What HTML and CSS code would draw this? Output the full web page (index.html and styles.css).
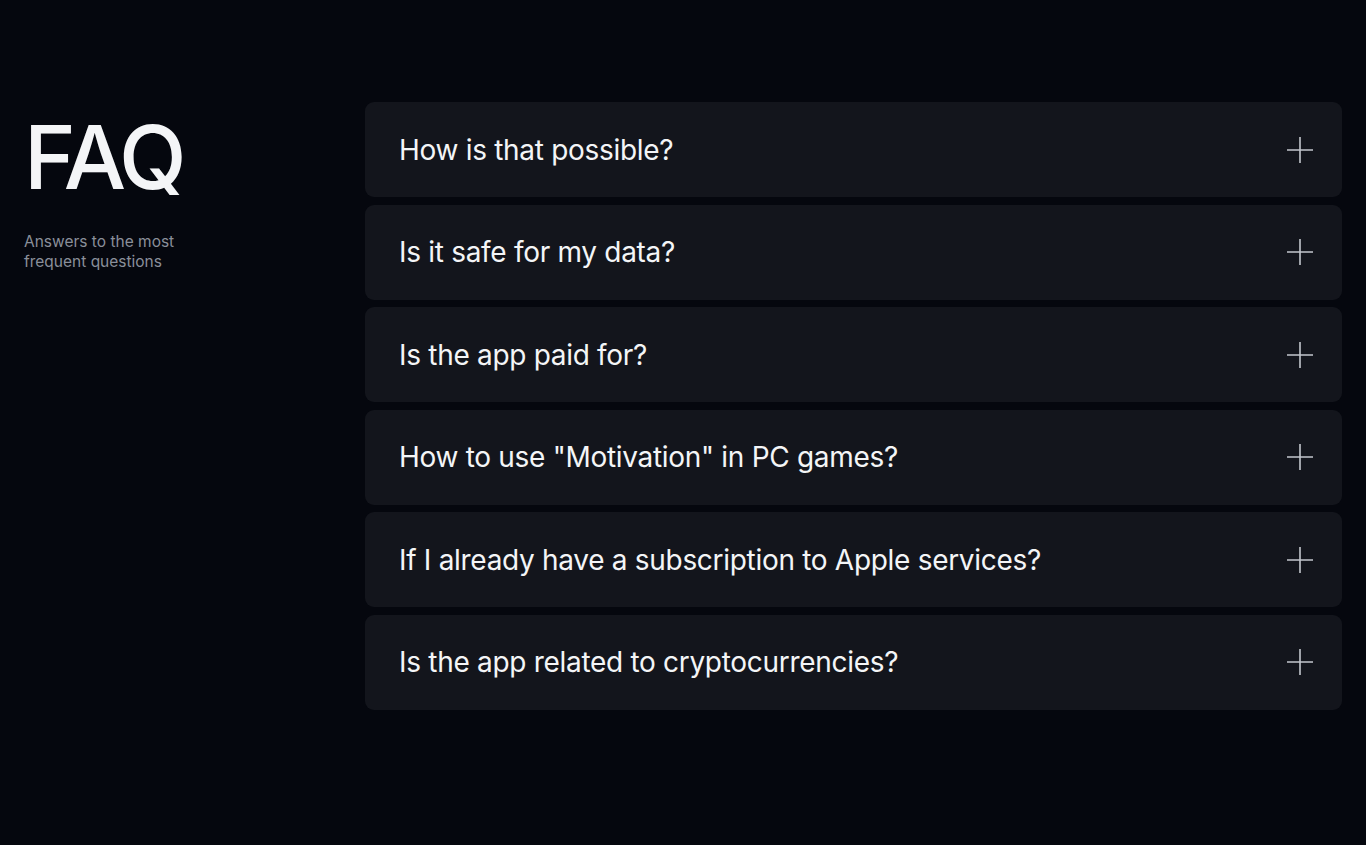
FILE: index.html
```html
<!DOCTYPE html>
<html lang="en">
<head>
  <meta charset="UTF-8" />
  <meta name="viewport" content="width=device-width, initial-scale=1.0" />
  <title>FAQ</title>
  <link rel="stylesheet" href="styles.css">
</head>
<body>

<main class="faq">
  <div class="faq-intro">
    <h1>FAQ</h1>
    <p>Answers to the most<br>frequent questions</p>
  </div>

  <div class="faq-list">
    <div class="faq-item">
      <span>How is that possible?</span>
      <svg class="plus" viewBox="0 0 28 28"><path d="M14 1v26M1 14h26"/></svg>
    </div>
    <div class="faq-item">
      <span>Is it safe for my data?</span>
      <svg class="plus" viewBox="0 0 28 28"><path d="M14 1v26M1 14h26"/></svg>
    </div>
    <div class="faq-item">
      <span>Is the app paid for?</span>
      <svg class="plus" viewBox="0 0 28 28"><path d="M14 1v26M1 14h26"/></svg>
    </div>
    <div class="faq-item">
      <span>How to use "Motivation" in PC games?</span>
      <svg class="plus" viewBox="0 0 28 28"><path d="M14 1v26M1 14h26"/></svg>
    </div>
    <div class="faq-item">
      <span>If I already have a subscription to Apple services?</span>
      <svg class="plus" viewBox="0 0 28 28"><path d="M14 1v26M1 14h26"/></svg>
    </div>
    <div class="faq-item">
      <span>Is the app related to cryptocurrencies?</span>
      <svg class="plus" viewBox="0 0 28 28"><path d="M14 1v26M1 14h26"/></svg>
    </div>
  </div>
</main>

</body>
</html>
```

FILE: styles.css
```css
body {
  font-family: 'Inter', 'Liberation Sans', sans-serif;
  background-color: #05070e;
  color: #f4f5f7;
  margin: 0;
  min-height: 845px;
}
.faq {
  display: flex;
  padding: 102px 24px 0 24px;
}
.faq-intro {
  width: 341px;
  flex-shrink: 0;
}
.faq-intro h1 {
  margin: 5px 0 0 0;
  font-size: 88px;
  font-weight: 500;
  line-height: 100px;
  letter-spacing: -4px;
}
.faq-intro p {
  margin: 25px 0 0 0;
  font-size: 15.5px;
  line-height: 20px;
  color: #8a8f9a;
}
.faq-list {
  flex: 1;
  display: flex;
  flex-direction: column;
  gap: 7.6px;
}
.faq-item {
  display: flex;
  align-items: center;
  justify-content: space-between;
  height: 95px;
  padding: 0 28px 0 34px;
  background-color: #13151c;
  border-radius: 9px;
  font-size: 28px;
  letter-spacing: -0.3px;
}
.plus {
  width: 28px;
  height: 28px;
  stroke: #c3c6cd;
  stroke-width: 1.6;
  fill: none;
}
```
